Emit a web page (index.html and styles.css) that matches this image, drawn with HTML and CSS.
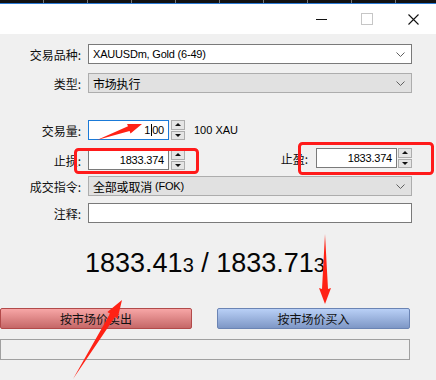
FILE: index.html
```html
<!DOCTYPE html>
<html lang="zh">
<head>
    <meta charset="UTF-8">
    <title>交易</title>
    <link rel="stylesheet" href="styles.css">
</head>
<body>
    <div class="chart-strip"></div>
    <div class="titlebar">
        <span class="win-btn min"></span>
        <span class="win-btn max"></span>
        <span class="win-btn close">
            <svg width="11" height="11" viewBox="0 0 11 11"><path d="M0.5 0.5 L10.5 10.5 M10.5 0.5 L0.5 10.5" stroke="#111" stroke-width="1.1"/></svg>
        </span>
    </div>

    <div class="dialog">
        <div class="row first">
            <label class="label">交易品种:</label>
            <div class="field wide">XAUUSDm, Gold (6-49)
                <svg class="chev" width="9" height="5" viewBox="0 0 9 5"><polyline points="0.5,0.5 4.5,4.5 8.5,0.5" fill="none" stroke="#606060"/></svg>
            </div>
        </div>
        <div class="row">
            <label class="label">类型:</label>
            <div class="field wide gray cjk">市场执行
                <svg class="chev" width="9" height="5" viewBox="0 0 9 5"><polyline points="0.5,0.5 4.5,4.5 8.5,0.5" fill="none" stroke="#606060"/></svg>
            </div>
        </div>

        <div class="row volume">
            <label class="label">交易量:</label>
            <div class="field num focus">1<span class="caret"></span>00</div>
            <div class="spin"><span class="up"></span><span class="down"></span></div>
            <span class="unit">100 XAU</span>
        </div>
        <div class="row stops">
            <label class="label">止损:</label>
            <div class="field num">1833.374</div>
            <div class="spin"><span class="up"></span><span class="down"></span></div>
            <div class="tp">
                <label class="label short">止盈:</label>
                <div class="field num">1833.374</div>
                <div class="spin"><span class="up"></span><span class="down"></span></div>
            </div>
        </div>
        <div class="row fill">
            <label class="label">成交指令:</label>
            <div class="field wide gray cjk">全部或取消 <span class="latin">(FOK)</span>
                <svg class="chev" width="9" height="5" viewBox="0 0 9 5"><polyline points="0.5,0.5 4.5,4.5 8.5,0.5" fill="none" stroke="#606060"/></svg>
            </div>
        </div>
        <div class="row comment">
            <label class="label">注释:</label>
            <div class="field wide"></div>
        </div>

        <div class="price">1833.41<small>3</small> / 1833.71<small>3</small></div>

        <div class="actions">
            <button class="btn sell">按市场价卖出</button>
            <button class="btn buy">按市场价买入</button>
        </div>
        <div class="status"></div>
    </div>

    <!-- annotations drawn over the screenshot -->
    <svg class="marks" width="436" height="380" viewBox="0 0 436 380">
        <rect x="75.5" y="149.5" width="122" height="23" rx="3" fill="none" stroke="#ff1a1a" stroke-width="3"/>
        <rect x="299.5" y="143.5" width="133" height="30" rx="3" fill="none" stroke="#ff1a1a" stroke-width="3"/>
        <polygon points="97,140 129.6,131.1 130.5,133.4 142,124 127.1,124 128,126.3" fill="#ff2215"/>
        <polygon points="325,234 328,289 331,288 325,304 319,288 322,289" fill="#ff2215"/>
        <polygon points="73,379 115,316.9 117.6,318.5 122,300 107.4,312.1 110,313.7" fill="#ff2215"/>
    </svg>
</body>
</html>
```

FILE: styles.css
```css
* { margin: 0; padding: 0; box-sizing: border-box; }
body {
    width: 436px; height: 380px; overflow: hidden; position: relative;
    background: #f0f0f0;
    font-family: "Liberation Sans", "Noto Sans CJK SC", sans-serif;
    font-size: 11px; color: #000;
}
.chart-strip {
    height: 4px; background: #111;
    border-bottom: 1px solid #2b7bd6;
    background-image: repeating-linear-gradient(90deg, transparent 0, transparent 43px, #777 43px, #777 44px);
}
.titlebar {
    height: 30px; background: #fff;
    display: flex; align-items: center; justify-content: flex-end;
}
.win-btn { width: 46px; height: 30px; display: flex; align-items: center; justify-content: center; }
.win-btn.min::before { content: ""; width: 11px; height: 1px; background: #111; }
.win-btn.max::before { content: ""; width: 10px; height: 10px; border: 1px solid #c6c6c6; }

.dialog { width: 412px; padding-top: 10px; }
.row { display: flex; align-items: center; height: 20px; margin-top: 9px; }
.row.first { margin-top: 0; }
.row.volume { margin-top: 27px; }
.row.stops { margin-top: 10px; }
.row.fill { margin-top: 6px; }
.row.comment { margin-top: 7px; }
.label {
    width: 81px; margin-right: 7px; text-align: right;
    font-family: "Noto Sans CJK SC", sans-serif; font-size: 12px; color: #111;
}
.label.short { width: auto; margin-right: 8px; }

.field {
    height: 20px; border: 1px solid #7a7a7a; background: #fff;
    display: flex; align-items: center; padding: 0 4px; position: relative;
    white-space: nowrap; letter-spacing: -0.2px;
}
.field.wide { width: 324px; }
.field.gray { background: #e1e1e1; border-color: #adadad; }
.cjk { font-family: "Noto Sans CJK SC", sans-serif; font-size: 12px; }
.latin { font-family: "Liberation Sans", sans-serif; font-size: 11px; margin-left: 3px; }
.chev { position: absolute; right: 6px; top: 7px; }
.field.num { width: 81px; justify-content: flex-end; padding-right: 4px; }
.field.focus { border-color: #1a7ad8; }
.caret { display: inline-block; width: 1px; height: 12px; background: #000; margin: 0 0.5px; }

.spin {
    width: 14px; height: 20px; margin-left: 2px;
    display: flex; flex-direction: column; gap: 1px;
}
.spin span {
    flex: 1; background: #e5e5e5; border: 1px solid #adadad;
    display: flex; align-items: center; justify-content: center;
}
.spin .up::before { content: ""; border: 3px solid transparent; border-bottom: 3px solid #111; border-top: 0; }
.spin .down::before { content: ""; border: 3px solid transparent; border-top: 3px solid #111; border-bottom: 0; }
.unit { margin-left: 9px; }

.tp { margin-left: auto; display: flex; align-items: center; position: relative; top: -2px; }
.tp .spin { margin-left: 1px; }

.price {
    width: 410px; margin-top: 24px; height: 32px; line-height: 32px; text-align: center;
    font-size: 27px; color: #050505;
}
.price small { font-size: 20px; }

.actions { width: 410px; display: flex; justify-content: space-between; margin-top: 29px; }
.btn {
    width: 192px; height: 21px; border-radius: 2px;
    font-family: "Noto Sans CJK SC", sans-serif; font-size: 12px; color: #111;
}
.btn.sell {
    background: linear-gradient(#f7a6a6, #c56767);
    border: 1px solid #b24a4a;
}
.btn.buy {
    width: 193px;
    background: linear-gradient(#b9d0f6, #7e97c6);
    border: 1px solid #6b84b4;
}
.status { width: 410px; margin-top: 10px; height: 21px; border: 1px solid #a0a0a0; }

.marks { position: absolute; left: 0; top: 0; pointer-events: none; }
```
